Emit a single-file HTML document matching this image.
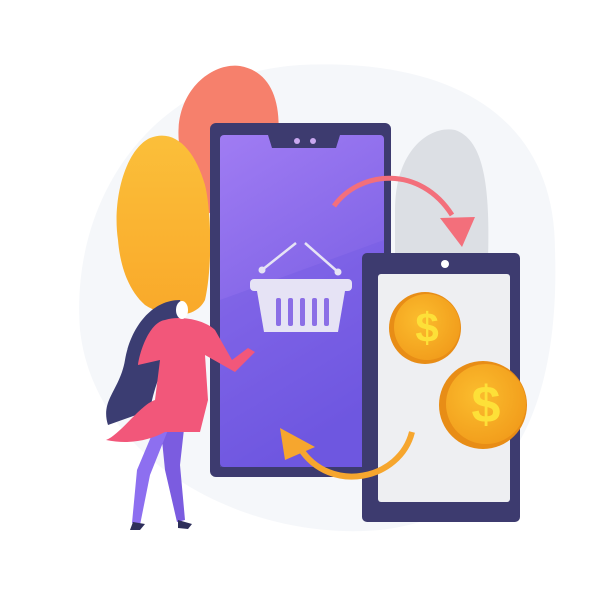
<!DOCTYPE html>
<html><head><style>html,body{margin:0;padding:0;background:#fff;width:600px;height:600px;overflow:hidden}</style></head>
<body>
<svg width="600" height="600" viewBox="0 0 600 600" xmlns="http://www.w3.org/2000/svg">
<defs>
<linearGradient id="scr" x1="0" y1="0" x2="0.3" y2="1"><stop offset="0" stop-color="#a07cf3"/><stop offset="1" stop-color="#6e56df"/></linearGradient>
<radialGradient id="coin" cx="0.4" cy="0.4" r="0.7"><stop offset="0" stop-color="#fbbd2e"/><stop offset="1" stop-color="#f19a1a"/></radialGradient>
<linearGradient id="leafO" x1="0" y1="0" x2="0" y2="1"><stop offset="0" stop-color="#fbbf3a"/><stop offset="1" stop-color="#f9a92a"/></linearGradient>
</defs>
<path d="M80 330 C70 200 150 75 300 65 C450 58 555 115 555 250 C560 400 515 515 380 530 C250 542 95 465 80 330Z" fill="#f5f7fa"/>
<!-- leaves -->
<path d="M395 210 C395 150 430 125 455 130 C485 140 490 190 488 260 L395 260Z" fill="#dcdfe4"/>
<path d="M180 150 C170 95 210 62 240 66 C275 72 285 110 275 160 C265 200 230 230 205 210 C190 195 183 175 180 150Z" fill="#f6806c"/>
<path d="M118 240 C112 200 125 150 150 138 C175 128 195 150 205 185 C212 215 212 270 205 300 C195 320 165 318 145 305 C128 290 120 265 118 240Z" fill="url(#leafO)"/>
<!-- big phone -->
<rect x="210" y="123" width="181" height="354" rx="6" fill="#3d3b6f"/>
<rect x="220" y="135" width="164" height="332" rx="4" fill="url(#scr)"/>
<path d="M268 135 L340 135 L336 148 L272 148Z" fill="#3d3b6f"/>
<circle cx="297" cy="141" r="3" fill="#c9a8f0"/><circle cx="313" cy="141" r="3" fill="#c9a8f0"/>
<path d="M220 300 L384 240 L384 467 L220 467Z" fill="#7058e2" opacity="0.35"/>
<!-- basket -->
<g stroke="#e6e3f5" stroke-width="2.5" fill="none"><path d="M262 270 L296 243"/><path d="M305 243 L338 272"/></g>
<circle cx="262" cy="270" r="3.5" fill="#e6e3f5"/><circle cx="338" cy="272" r="3.5" fill="#e6e3f5"/>
<rect x="250" y="279" width="102" height="12" rx="4" fill="#e6e3f5"/>
<path d="M257 291 L345 291 L338 332 L264 332Z" fill="#e6e3f5"/>
<g fill="#8b6ee6"><rect x="276" y="298" width="5" height="28" rx="2"/><rect x="288" y="298" width="5" height="28" rx="2"/><rect x="300" y="298" width="5" height="28" rx="2"/><rect x="312" y="298" width="5" height="28" rx="2"/><rect x="324" y="298" width="5" height="28" rx="2"/></g>
<!-- small phone -->
<rect x="362" y="253" width="158" height="269" rx="5" fill="#3d3b6f"/>
<rect x="378" y="274" width="132" height="228" rx="3" fill="#eeeff2"/>
<circle cx="445" cy="264" r="4" fill="#fff"/>
<!-- coins -->
<circle cx="425" cy="328" r="36" fill="#e88d16"/><circle cx="427" cy="327" r="33" fill="url(#coin)"/>
<text x="427" y="342" font-family="Liberation Sans,sans-serif" font-weight="bold" font-size="42" text-anchor="middle" fill="#fde038">$</text>
<circle cx="483" cy="405" r="44" fill="#e88d16"/><circle cx="486" cy="404" r="40" fill="url(#coin)"/>
<text x="486" y="422" font-family="Liberation Sans,sans-serif" font-weight="bold" font-size="52" text-anchor="middle" fill="#fde038">$</text>
<!-- arrows -->
<path d="M334 206 C360 170 420 165 452 215" stroke="#f36f7b" stroke-width="5" fill="none"/>
<path d="M440 218 L475 217 L462 247Z" fill="#f36f7b"/>
<path d="M412 432 C400 480 330 495 300 448" stroke="#f6a62e" stroke-width="6" fill="none"/>
<path d="M280 428 L315 447 L285 460Z" fill="#f6a62e"/>
<!-- woman -->
<path d="M180 300 C150 300 130 330 125 360 C120 390 100 400 108 425 L150 410 C155 380 170 350 185 320Z" fill="#3b3d72"/>
<path d="M160 420 L185 420 L180 465 L185 520 L177 522 L165 470Z" fill="#7b5ce0"/>
<path d="M158 420 L170 425 L150 475 L140 525 L132 523 L137 470Z" fill="#8d6ff0"/>
<path d="M165 320 C150 322 140 350 138 365 L160 360 L155 400 C140 405 120 435 106 440 C130 445 150 440 165 432 L200 432 L208 400 L205 355 L235 372 L255 352 L248 348 L232 360 L215 330 C205 320 180 315 165 320Z" fill="#f2577a"/>
<ellipse cx="182" cy="310" rx="6" ry="9" fill="#fff"/>
<path d="M133 522 L145 524 L140 530 L130 530Z" fill="#2e2f5a"/><path d="M178 520 L192 524 L188 529 L178 528Z" fill="#2e2f5a"/>
</svg>
</body></html>
